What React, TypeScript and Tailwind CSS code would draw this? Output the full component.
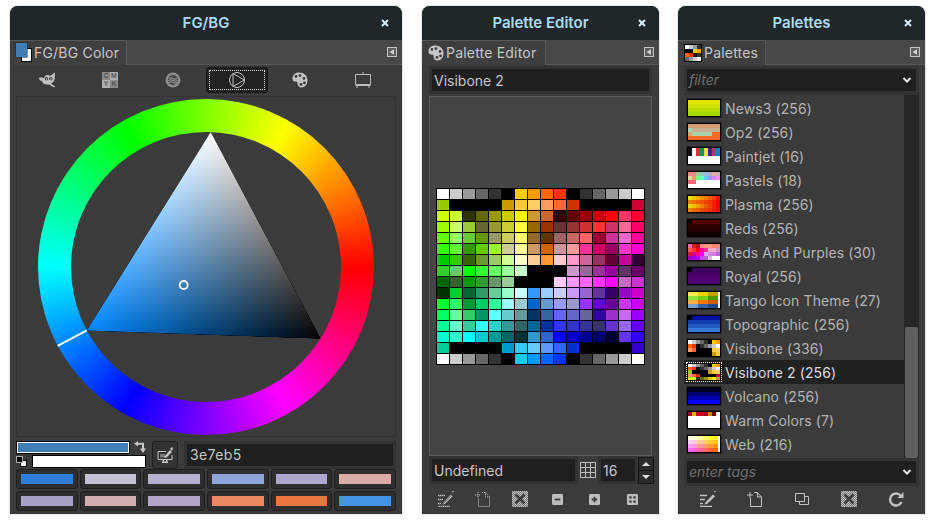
import { ReactNode } from "react";

const VISIBONE = [
  "fff ccc 999 666 333 000 fc0 f90 f60 f30 000 333 666 999 ccc fff",
  "9c0 000 000 000 000 c90 fc3 fc6 f96 f63 c30 000 000 000 000 c03",
  "cf0 cf3 330 660 990 cc0 ff0 c93 c63 300 600 900 c00 f00 f36 f03",
  "9f0 cf6 9c3 663 993 cc3 ff3 960 930 633 933 c33 f33 c36 f69 f06",
  "6f0 9f6 6c3 690 996 cc6 ff6 963 630 966 c66 f66 903 c39 f6c f09",
  "3f0 6f3 390 6c0 9f3 cc9 ff9 c96 c60 c99 f99 f39 c06 906 f3c f0c",
  "0c0 3c0 360 693 9c6 cf9 ffc fc9 f93 fcc f9c c69 936 603 c09 303",
  "3c3 6c6 0f0 3f3 6f6 9f9 cfc 000 000 000 c9c 969 939 909 636 606",
  "060 363 090 393 696 9c9 000 000 000 fcf f9f f6f f3f f0f c6c c3c",
  "030 0c3 063 396 6c9 9fc cff 39f 9cf ccf c9f 96c 639 306 90c c0c",
  "0f3 3f6 093 0c6 3f9 9ff 9cc 06c 69c 99f 99c 93f 60c 609 c3f c0f",
  "0f6 6f9 3c6 096 6ff 6cc 699 036 369 66f 66c 669 309 93c c6f 90f",
  "0f9 6fc 3c9 3ff 3cc 399 366 069 039 33f 33c 339 336 63c 96f 60f",
  "0fc 3fc 0ff 0cc 099 066 033 39c 36c 00f 00c 009 006 003 63f 30f",
  "0c9 000 000 000 000 09c 3cf 6cf 69f 36f 03c 000 000 000 000 30c",
  "fff ccc 999 666 333 000 0cf 09f 06f 03f 000 333 666 999 ccc fff",
];

// cell syntax: colour or colour:weight
const PALETTES: { name: string; rows: string[] }[] = [
  { name: "News3 (256)", rows: ["e4e600", "d2e200", "b8dc00", "a0d800"] },
  {
    name: "Op2 (256)",
    rows: [
      "d59b6c",
      "a8d4b4:1 c8ae8e:7",
      "d8a070:1 a8d0a8:5 ff6820:2",
      "f06a28",
    ],
  },
  {
    name: "Paintjet (16)",
    rows: ["111 fff d33 286 ed4 336 b37 27c", "111 fff d33 286 ed4 336 b37 27c", "fff", "fff"],
  },
  {
    name: "Pastels (18)",
    rows: ["e88 e88 9c9 8cb 9bd aac daa cab", "dd9 e96 6f8 6fc 6cf 99f c8f f8f", "f67 f67 fff:6", "fff"],
  },
  {
    name: "Plasma (256)",
    rows: [
      "f0e000 f5c000 f5a800 f59000 f07800 f06000 f04000 f01000",
      "f08000 f07000 f06000 f05000 f04000 f03000 f02000 f00000",
      "e8d800 f0c000 f0a000 f08000 f06000 f04000 f02000 f00000",
      "e88000 e87000 e86000 e85000 e84000 e83000 e82000 e81000",
    ],
  },
  { name: "Reds (256)", rows: ["000:1 500:7", "300", "200", "100"] },
  {
    name: "Reds And Purples (30)",
    rows: [
      "e6a c22 b11 f88 f97 f98 f86 e88",
      "f54 f33 f00 f0a f39 fac fac c9c",
      "d14 c08 f09 f0f daf c8d d7d b6d",
      "a0b 90e a0f c4f a6c dbd fff fff",
    ],
  },
  { name: "Royal (256)", rows: ["000:1 400060:7", "480068", "500070", "500070"] },
  {
    name: "Tango Icon Theme (27)",
    rows: [
      "fce94f:10 edd400:10 c4a000:10 fff:2",
      "8ae234:10 73d216:10 4e9a06:10 fff:2",
      "fcaf3e:10 f57900:10 ce5c00:10 fff:2",
      "729fcf:10 3465a4:10 204a87:10 fff:2",
    ],
  },
  { name: "Topographic (256)", rows: ["000:1 0010a0:7", "1040b0", "2058c0", "3878d8"] },
  {
    name: "Visibone (336)",
    rows: [
      "fff ccc 999 666 333 000 fc0 f90",
      "f60 f30 000 333 666 999 ccc fff",
      "f96 f63 000 000 000 000 fc3 fc6",
      "000 000 000 000 000 000 c90 fc3",
    ],
  },
  {
    name: "Visibone 2 (256)",
    rows: [
      "fff ccc 999 666 333 000 fc0 f90",
      "f60 f30 000 333 666 999 ccc fff",
      "9c0 000 000 000 000 c90 fc3 fc6",
      "f96 f63 c30 000 000 000 000 c03",
      "cf0 cf3 330 660 990 cc0 ff0 c93",
    ],
  },
  { name: "Volcano (256)", rows: ["000020", "000070", "0000b0", "0000f0"] },
  { name: "Warm Colors (7)", rows: ["a01 cb0 c02 c02 a01 c80 700 fff", "fff", "fff", "fff"] },
  {
    name: "Web (216)",
    rows: [
      "ffd:5 ffc:5 ff9:5 ff6:5 ff3:5 ff0:5 fff:2",
      "fcf:5 fcc:5 fc9:5 fc6:5 fc3:5 fc0:5 fff:2",
      "f9f:5 f9c:5 f99:5 f96:5 f93:5 f90:5 fff:2",
      "f6f:5 f6c:5 f69:5 f66:5 f63:5 f60:5 fff:2",
    ],
  },
];

const SWATCHES = [
  "bg-[#2f7fd8]",
  "bg-[#c6c0d6]",
  "bg-[#b8b0d0]",
  "bg-[#8fa6da]",
  "bg-[#aea6cc]",
  "bg-[#dcaca6]",
  "bg-[#a9a0c8]",
  "bg-[#d4aeb0]",
  "bg-[#b4a6c8]",
  "bg-[#ea8a62]",
  "bg-[#ea7640]",
  "bg-[#4595e6]",
];

const Cell = ({ spec }: { spec: string }) => {
  const [color, weight] = spec.split(":");
  return (
    <div
      className="h-full"
      style={{ background: `#${color}`, flexGrow: Number(weight ?? 1), flexBasis: 0 }}
    />
  );
};

const Thumb = ({ rows, selected }: { rows: string[]; selected?: boolean }) => (
  <div
    className={`flex h-[18px] w-[34px] shrink-0 flex-col border border-black bg-black ${
      selected ? "outline-1 outline-dotted outline-white" : "shadow-[0_0_0_1px_#262626]"
    }`}
  >
    {rows.map((row, i) => (
      <div key={i} className="flex min-h-0 flex-1">
        {row.split(" ").map((spec, j) => (
          <Cell key={j} spec={spec} />
        ))}
      </div>
    ))}
  </div>
);

const PaletteIcon = ({ className }: { className?: string }) => (
  <svg viewBox="0 0 16 16" className={className}>
    <path
      fillRule="evenodd"
      fill="currentColor"
      d="M7 0.5C3 0.5 0.5 3 0.5 6.5 0.5 8.5 1.5 9.5 3 9.5 4.5 9.5 5.5 9.5 5.5 11 5.5 13 6.5 15.5 9.5 15.5 13 15.5 15.5 12.5 15.5 8.5 15.5 3.5 12 0.5 7 0.5ZM4 3A1.4 1.4 0 1 1 4 5.8 1.4 1.4 0 1 1 4 3ZM8 2.2A1.4 1.4 0 1 1 8 5 1.4 1.4 0 1 1 8 2.2ZM12 5A1.4 1.4 0 1 1 12 7.8 1.4 1.4 0 1 1 12 5ZM12.5 9.5A1.4 1.4 0 1 1 12.5 12.3 1.4 1.4 0 1 1 12.5 9.5ZM9 11A1.4 1.4 0 1 1 9 13.8 1.4 1.4 0 1 1 9 11Z"
    />
  </svg>
);

const WilberIcon = () => (
  <svg viewBox="0 0 16 16" className="size-4 text-[#c2c2c2]">
    <path
      fill="currentColor"
      d="M0 6C2 5 4 6 5 6 6 3 9 2 11 4L16 0.5 15.5 8C15 10 13 11 12 11.5L16 14.5 15 15.5 10 12.5C6 13 3 11 3 9 1 9 0 7 0 6Z"
    />
    <circle cx="7.5" cy="6.8" r="1.8" fill="#4a4a4a" />
    <circle cx="11.8" cy="6.8" r="1.8" fill="#4a4a4a" />
    <circle cx="7.5" cy="7" r="0.7" fill="#c2c2c2" />
    <circle cx="11.8" cy="7" r="0.7" fill="#c2c2c2" />
  </svg>
);

const WaterIcon = () => (
  <svg viewBox="0 0 16 16" className="size-4" fill="none">
    <circle cx="8" cy="8" r="7.5" fill="#8c8c8c" />
    <circle cx="8" cy="8" r="5" fill="#444" />
    <path d="M4 6.5Q6 5 8 6.5T12 6.5M3.5 8.5Q6 7 8 8.5T12.5 8.5M4 10.5Q6 9 8 10.5T12 10.5" stroke="#aaa" strokeWidth="0.9" />
  </svg>
);

const WheelIcon = () => (
  <svg viewBox="0 0 16 16" className="size-4 text-[#bdbdbd]" fill="none" stroke="currentColor">
    <circle cx="8" cy="8" r="7.5" />
    <path d="M4 1.5V14.5L15.3 8Z" strokeLinejoin="round" />
  </svg>
);

const EaselIcon = () => (
  <svg viewBox="0 0 16 16" className="size-4 text-[#bdbdbd]" fill="none" stroke="currentColor">
    <path d="M0.5 2.5H15.5V12.5H0.5ZM8 0V2.5M0.5 13.5H15.5M3 13L1.5 16M13 13L14.5 16" />
  </svg>
);

const Stipple = ({ id }: { id: string }) => (
  <pattern id={id} width="2" height="2" patternUnits="userSpaceOnUse">
    <rect width="2" height="2" fill="#777" />
    <rect width="1" height="1" fill="#c2c2c2" />
    <rect x="1" y="1" width="1" height="1" fill="#c2c2c2" />
  </pattern>
);

const EditIcon = ({ stipple }: { stipple?: boolean }) => (
  <svg viewBox="0 0 16 16" className="size-4" fill="none">
    <Stipple id="editS" />
    <path
      d="M0 4.5H7M0 8.5H5M0 12.5H3M0 15.5H12"
      stroke={stipple ? "url(#editS)" : "#c2c2c2"}
      strokeWidth="1.5"
    />
    <path d="M5 12 13 3.5 15 5.5 7 13 4.5 13.5Z" fill={stipple ? "url(#editS)" : "#c2c2c2"} />
    <path d="M14 1 16 0" stroke="#c2c2c2" />
  </svg>
);

const NewIcon = ({ stipple }: { stipple?: boolean }) => (
  <svg viewBox="0 0 16 16" className="size-4" fill="none">
    <path
      d="M7 1.5H10.5L14.5 6V15.5H3.5V7M10.5 1.5V6H14.5M0 4H6M3 1V7"
      stroke="#c2c2c2"
      strokeDasharray={stipple ? "1 1" : undefined}
    />
  </svg>
);

const DupIcon = () => (
  <svg viewBox="0 0 16 16" className="size-4" fill="none" stroke="#c2c2c2">
    <path d="M1.5 2.5H10.5V10.5H1.5ZM5.5 10.5V13.5H14.5V5.5H10.5" />
  </svg>
);

const DeleteIcon = ({ id }: { id: string }) => (
  <svg viewBox="0 0 16 16" className="size-4">
    <Stipple id={id} />
    <rect width="16" height="16" fill={`url(#${id})`} rx="1" />
    <path d="M3.5 3.5 12.5 12.5M12.5 3.5 3.5 12.5" stroke="#3d3d3d" strokeWidth="2.6" />
  </svg>
);

const RefreshIcon = () => (
  <svg viewBox="0 0 16 16" className="size-4" fill="none">
    <path d="M13.5 6A6 6 0 1 0 13.5 11" stroke="#c2c2c2" strokeWidth="2.4" />
    <path d="M9.5 7H15.5V1Z" fill="#c2c2c2" />
  </svg>
);

const BoxIcon = ({ kind }: { kind: "minus" | "plus" | "fit" }) => (
  <svg viewBox="0 0 12 12" className="size-[11px]">
    <rect width="12" height="12" rx="1.5" fill="#bdbdbd" />
    {kind === "minus" && <path d="M3 6H9" stroke="#3d3d3d" strokeWidth="2" />}
    {kind === "plus" && <path d="M3 6H9M6 3V9" stroke="#3d3d3d" strokeWidth="2" />}
    {kind === "fit" && (
      <path d="M2.5 2.5H5V5H2.5ZM7 2.5H9.5V5H7ZM2.5 7H5V9.5H2.5ZM7 7H9.5V9.5H7Z" fill="#3d3d3d" />
    )}
  </svg>
);

const ConfigureIcon = () => (
  <svg viewBox="0 0 10 10" className="size-[10px] shrink-0">
    <rect x="0.5" y="0.5" width="9" height="9" fill="#5e5e5e" stroke="#c4c4c4" />
    <path d="M2.5 5 7 2.2V7.8Z" fill="#d0d0d0" />
  </svg>
);

const Chevron = () => (
  <svg viewBox="0 0 10 6" className="h-[6px] w-[10px] shrink-0" fill="none">
    <path d="M1.5 1 5 4.5 8.5 1" stroke="#e4e4e4" strokeWidth="2" />
  </svg>
);

const Entry = ({ children, className }: { children: ReactNode; className?: string }) => (
  <div
    className={`flex h-[28px] items-center border-[3px] border-[#333] bg-[#1f1f1f] pl-[2px] ${className ?? ""}`}
  >
    {children}
  </div>
);

const FgBgTabIcon = () => (
  <div className="relative h-[20px] w-[16px] shrink-0">
    <div className="absolute left-[5px] top-[5px] h-[14px] w-[11px] border border-black bg-white" />
    <div className="absolute left-0 top-0 h-[14px] w-[11px] bg-[#3e7eb5] shadow-[0_0_0_0.5px_#222]" />
  </div>
);

const Dock = ({
  title,
  width,
  tabWidth,
  icon,
  label,
  children,
}: {
  title: string;
  width: string;
  tabWidth: string;
  icon: ReactNode;
  label: string;
  children: ReactNode;
}) => (
  <section
    className={`flex h-[508px] flex-col overflow-hidden rounded-t-[8px] bg-[#3b3b3b] shadow-[0_0_2px_rgba(0,0,0,0.35)] ${width}`}
  >
    <header className="flex h-[34px] shrink-0 items-center bg-[#1f272b]">
      <span className="w-[34px] shrink-0" />
      <h2 className="flex-1 text-center text-[15px] font-semibold text-[#abdcf8]">{title}</h2>
      <span className="flex w-[34px] shrink-0 justify-center">
        <svg viewBox="0 0 8 8" className="size-2" fill="none">
          <path d="M1 1 7 7M7 1 1 7" stroke="#d8eefc" strokeWidth="2" />
        </svg>
      </span>
    </header>
    <div className="flex h-[25px] shrink-0 items-center justify-between border-b border-[#585858] bg-[#484848] pr-[5px]">
      <div
        className={`flex h-[25px] items-center gap-[2px] border-t border-r border-[#585858] bg-[#3f3f3f] pl-[6px] ${tabWidth}`}
      >
        {icon}
        <span className="text-[14px] tracking-[0.2px] text-[#c6c6c6]">{label}</span>
      </div>
      <ConfigureIcon />
    </div>
    {children}
  </section>
);

const Wheel = () => {
  // hue 208: the triangle's corners sit on the inner edge of the ring
  const c = 168;
  const r = 135;
  const at = (deg: number, radius = r) => {
    const a = (deg * Math.PI) / 180;
    return [c + radius * Math.cos(a), c - radius * Math.sin(a)];
  };
  const hue = at(208);
  const white = at(88);
  const black = at(328);
  const foot = (p: number[], a: number[], b: number[]) => {
    const dx = b[0] - a[0];
    const dy = b[1] - a[1];
    const t = ((p[0] - a[0]) * dx + (p[1] - a[1]) * dy) / (dx * dx + dy * dy);
    return [a[0] + t * dx, a[1] + t * dy];
  };
  const whiteFoot = foot(white, hue, black);
  const hueFoot = foot(hue, white, black);
  const points = [hue, white, black].map((p) => p.join(",")).join(" ");
  const outer = at(208, 168);
  return (
    <div className="relative size-[336px] rounded-full bg-[conic-gradient(from_90deg,#f00,#f0f,#00f,#0ff,#0f0,#ff0,#f00)]">
      <div className="absolute inset-[33px] rounded-full bg-[#3b3b3b]" />
      <svg viewBox="0 0 336 336" className="absolute inset-0 size-full">
        <defs>
          <linearGradient
            id="toWhite"
            gradientUnits="userSpaceOnUse"
            x1={white[0]}
            y1={white[1]}
            x2={whiteFoot[0]}
            y2={whiteFoot[1]}
          >
            <stop offset="0" stopColor="#fff" />
            <stop offset="1" stopColor="#000" />
          </linearGradient>
          <linearGradient
            id="toHue"
            gradientUnits="userSpaceOnUse"
            x1={hue[0]}
            y1={hue[1]}
            x2={hueFoot[0]}
            y2={hueFoot[1]}
          >
            <stop offset="0" stopColor="#0088ff" />
            <stop offset="1" stopColor="#000" />
          </linearGradient>
        </defs>
        <g className="isolate">
          <polygon points={points} fill="#000" />
          <polygon points={points} fill="url(#toWhite)" className="mix-blend-plus-lighter" />
          <polygon points={points} fill="url(#toHue)" className="mix-blend-plus-lighter" />
        </g>
        <line x1={hue[0]} y1={hue[1]} x2={outer[0]} y2={outer[1]} stroke="#fff" strokeWidth="2" />
        <circle cx="145.7" cy="186" r="4" fill="none" stroke="#fff" strokeWidth="1.8" />
      </svg>
    </div>
  );
};

const FgBgPanel = () => (
  <Dock
    title="FG/BG"
    width="w-[392px]"
    tabWidth="w-[117px]"
    label="FG/BG Color"
    icon={<FgBgTabIcon />}
  >
    <div className="flex flex-1 flex-col px-[6px]">
      <div className="-ml-px grid h-[31px] w-[380px] shrink-0 grid-cols-6 justify-items-center pt-[2px]">
        <div className="flex h-[26px] items-center">
          <WilberIcon />
        </div>
        <div className="flex h-[26px] items-center">
          <div className="grid size-4 grid-cols-2 bg-[#b0b0b0] text-center font-['Liberation_Sans',sans-serif] text-[7px] font-bold leading-[8px] text-[#555]">
            <span className="bg-[#8a8a8a]">C</span>
            <span>M</span>
            <span>Y</span>
            <span className="bg-[#8a8a8a]">K</span>
          </div>
        </div>
        <div className="flex h-[26px] items-center">
          <WaterIcon />
        </div>
        <div className="flex h-[26px] w-[62px] items-center justify-center rounded-[3px] border border-[#151515] bg-[#222] p-[2px]">
          <div className="flex size-full items-center justify-center border border-dotted border-[#ddd]">
            <WheelIcon />
          </div>
        </div>
        <div className="flex h-[26px] items-center">
          <PaletteIcon className="size-4 text-[#c2c2c2]" />
        </div>
        <div className="flex h-[26px] items-center">
          <EaselIcon />
        </div>
      </div>
      <div className="flex h-[341px] shrink-0 items-center justify-center border border-[#333]">
        <Wheel />
      </div>
      <div className="mt-[4px] flex h-[28px] shrink-0 gap-[6px]">
        <div className="relative w-[130px] shrink-0">
          <div className="h-[13px] w-[114px] border border-black bg-white p-px">
            <div className="size-full bg-[#3e7eb5]" />
          </div>
          <div className="absolute left-[16px] top-[14px] h-[13px] w-[114px] border border-black bg-white" />
          <svg viewBox="0 0 12 12" className="absolute left-[118px] top-0 size-3" fill="none">
            <path d="M3 2.8H9V8" stroke="#c8c8c8" strokeWidth="2" />
            <path d="M0 2.8 4 0V5.6ZM6 7.5H12L9 12Z" fill="#c8c8c8" />
          </svg>
          <div className="absolute left-0 top-[15px] size-[12px]">
            <div className="absolute left-[4px] top-[4px] size-[7px] border border-black bg-white" />
            <div className="absolute left-0 top-0 size-[7px] border border-[#aaa] bg-black" />
          </div>
        </div>
        <div className="flex w-[26px] shrink-0 items-center justify-center rounded-[3px] border border-[#1f1f1f] bg-[#333]">
          <svg viewBox="0 0 16 16" className="size-4" fill="none">
            <path d="M1 4.5H9M1 4.5V12.5H15V8" stroke="#c2c2c2" />
            <path d="M3 7H8V10.5H3Z" fill="#777" />
            <path d="M7 10 13 3 15 5 9 11ZM13 2 15 0 16 1 15 4Z" fill="#c2c2c2" />
            <path d="M5 15.3H11M6.5 12.5 6 15M9.5 12.5 10 15" stroke="#c2c2c2" strokeWidth="1.4" />
          </svg>
        </div>
        <Entry className="flex-1">
          <span className="-mt-[2px] pl-px text-[14px] tracking-[0.4px] text-[#c6c6c6]">3e7eb5</span>
        </Entry>
      </div>
      <div className="grid flex-1 grid-cols-6 gap-x-[2px] gap-y-[2.5px] pb-[3px]">
        {SWATCHES.map((swatch) => (
          <div key={swatch} className="rounded-[3px] border border-[#1f1f1f] bg-[#2e2e2e] p-[4px]">
            <div className={`h-full ${swatch}`} />
          </div>
        ))}
      </div>
    </div>
  </Dock>
);

const EditorPanel = () => (
  <Dock
    title="Palette Editor"
    width="w-[237px]"
    tabWidth="w-[124px]"
    label="Palette Editor"
    icon={<PaletteIcon className="size-4 shrink-0 text-[#c6c6c6]" />}
  >
    <div className="flex flex-1 flex-col px-[7px] pt-[1px]">
      <Entry className="shrink-0">
        <span className="text-[14px] text-[#c6c6c6]">Visibone 2</span>
      </Entry>
      <div className="mt-[2px] flex h-[360px] shrink-0 items-center justify-center border border-[#5a5a5a] bg-[#454545]">
        <div className="flex flex-col gap-px bg-black p-px">
          {VISIBONE.map((row, i) => (
            <div key={i} className="flex gap-px">
              {row.split(" ").map((color, j) => (
                <div key={j} className="h-[10px] w-[12px]" style={{ background: `#${color}` }} />
              ))}
            </div>
          ))}
        </div>
      </div>
      <div className="flex h-[28px] shrink-0 items-center">
        <Entry className="w-[149px] shrink-0">
          <span className="text-[14px] text-[#c6c6c6]">Undefined</span>
        </Entry>
        <svg viewBox="0 0 16 16" className="ml-[2px] size-4 shrink-0" fill="none" stroke="#bdbdbd">
          <path d="M0.5 0.5H15.5V15.5H0.5ZM5.5 0.5V15.5M10.5 0.5V15.5M0.5 5.5H15.5M0.5 10.5H15.5" />
        </svg>
        <Entry className="ml-[2px] w-[40px] shrink-0">
          <span className="text-[14px] text-[#c6c6c6]">16</span>
        </Entry>
        <div className="flex h-[27px] w-[16px] shrink-0 flex-col border border-[#151515] bg-[#2b2b2b]">
          <div className="flex flex-1 items-center justify-center border-b border-[#151515]">
            <div className="size-0 border-x-[4px] border-b-[4px] border-x-transparent border-b-[#ddd]" />
          </div>
          <div className="flex flex-1 items-center justify-center">
            <div className="size-0 border-x-[4px] border-t-[4px] border-x-transparent border-t-[#ddd]" />
          </div>
        </div>
      </div>
      <div className="-ml-[2px] grid w-[224px] flex-1 grid-cols-6 items-center justify-items-center py-[2px]">
        <EditIcon stipple />
        <NewIcon stipple />
        <DeleteIcon id="delA" />
        <BoxIcon kind="minus" />
        <BoxIcon kind="plus" />
        <BoxIcon kind="fit" />
      </div>
    </div>
  </Dock>
);

const PalettesPanel = () => (
  <Dock
    title="Palettes"
    width="w-[247px]"
    tabWidth="w-[88px]"
    label="Palettes"
    icon={
      <div className="grid size-[18px] shrink-0 grid-cols-4 border border-black bg-black">
        {"fff ccc 999 333 000 000 fc0 f90 f60 f30 000 333 666 999 ccc fff".split(" ").map((color, i) => (
          <div key={i} style={{ background: `#${color}` }} />
        ))}
      </div>
    }
  >
    <div className="flex flex-1 flex-col px-[6px] pt-[1px]">
      <Entry className="shrink-0 justify-between pr-[4px]">
        <span className="-mt-[2px] text-[14px] italic text-[#6f6f6f]">filter</span>
        <Chevron />
      </Entry>
      <div className="flex h-[364px] shrink-0 border-t border-[#333]">
        <ul className="flex-1 pt-[1px]">
          {PALETTES.map((palette, i) => {
            const selected = palette.name === "Visibone 2 (256)";
            return (
              <li
                key={i}
                className={`flex h-[24px] items-center gap-[4px] pl-[3px] ${selected ? "bg-[#212121]" : ""}`}
              >
                <Thumb rows={palette.rows} selected={selected} />
                <span className={`text-[14px] tracking-[0.1px] ${selected ? "text-[#dcdcdc]" : "text-[#b4b4b4]"}`}>
                  {palette.name}
                </span>
              </li>
            );
          })}
        </ul>
        <div className="flex w-[15px] shrink-0 flex-col justify-end bg-[#262626] px-px">
          <div className="h-[131px] rounded-[2px] bg-[#5e5e5e]" />
        </div>
      </div>
      <Entry className="shrink-0 justify-between pr-[4px]">
        <span className="-mt-[2px] text-[14px] italic text-[#6f6f6f]">enter tags</span>
        <Chevron />
      </Entry>
      <div className="grid flex-1 grid-cols-5 items-center justify-items-center pb-[2px]">
        <EditIcon />
        <NewIcon />
        <DupIcon />
        <DeleteIcon id="delB" />
        <RefreshIcon />
      </div>
    </div>
  </Dock>
);

export default function App() {
  return (
    <div className="flex h-[524px] w-[946px] items-start gap-[20px] overflow-hidden bg-white pl-[10px] pt-[6px] font-['Inter',sans-serif]">
      <FgBgPanel />
      <EditorPanel />
      <div className="-ml-px">
        <PalettesPanel />
      </div>
    </div>
  );
}
